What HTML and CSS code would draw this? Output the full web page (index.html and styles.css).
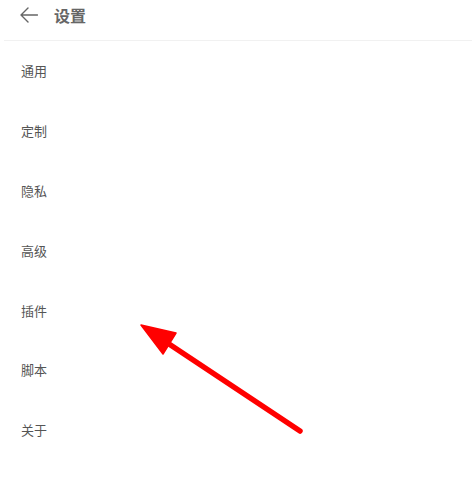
FILE: index.html
```html
<!DOCTYPE html>
<html lang="zh">
<head>
<meta charset="utf-8">
<link rel="stylesheet" href="styles.css">
</head>
<body>
<div class="page">
  <header class="bar">
    <svg class="back" width="18" height="16" viewBox="0 0 18 16"><path d="M8 1 L1 8 L8 15 M1 8 H17.5" fill="none" stroke="#666" stroke-width="1.4" stroke-linecap="round" stroke-linejoin="round"/></svg>
    <span class="title">设置</span>
  </header>
  <ul class="list">
    <li>通用</li>
    <li>定制</li>
    <li>隐私</li>
    <li>高级</li>
    <li>插件</li>
    <li>脚本</li>
    <li>关于</li>
  </ul>
  <svg class="arrow" width="474" height="493" viewBox="0 0 474 493">
    <line x1="300" y1="431" x2="160" y2="338" stroke="#f00" stroke-width="5.5" stroke-linecap="round"/>
    <polygon points="141,325 176,333 163,354" fill="#f00" stroke="#f00" stroke-width="1.5" stroke-linejoin="round"/>
  </svg>
</div>
</body>
</html>
```
FILE: styles.css
```css
html, body {
  margin: 0;
  padding: 0;
  background: #fff;
}
.page {
  position: relative;
  width: 474px;
  height: 493px;
  overflow: hidden;
  font-family: "Noto Sans CJK SC", "Noto Sans", sans-serif;
}
.bar {
  height: 41px;
  display: flex;
  align-items: center;
  padding-left: 20px;
  padding-bottom: 11px;
  box-sizing: border-box;
  gap: 16px;
  margin: 0 2px 0 4px;
  padding-left: 16px;
  border-bottom: 1px solid #f1f1f1;
}
.back {
  display: block;
}
.title {
  font-size: 16px;
  font-weight: 700;
  color: #666;
  line-height: 16px;
}
.list {
  list-style: none;
  margin: 0;
  padding: 0;
}
.list li {
  height: 59.8px;
  display: flex;
  align-items: center;
  padding-left: 21px;
  font-size: 13px;
  color: #555;
}
.arrow {
  position: absolute;
  left: 0;
  top: 0;
}
```
